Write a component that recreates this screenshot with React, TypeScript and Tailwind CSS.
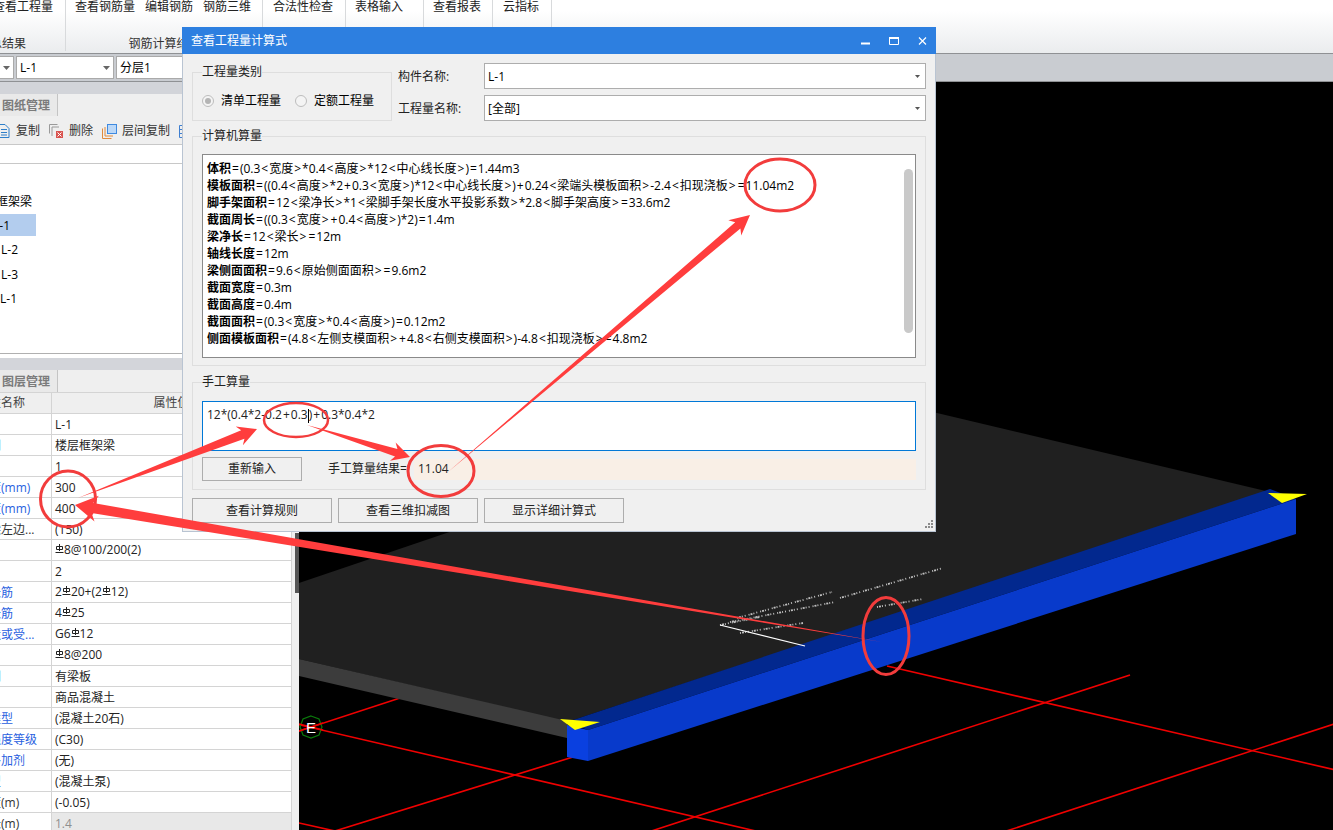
const formulas = [
  ["体积", "=(0.3<宽度>*0.4<高度>*12<中心线长度>)=1.44m3"],
  ["模板面积", "=((0.4<高度>*2+0.3<宽度>)*12<中心线长度>)+0.24<梁端头模板面积>-2.4<扣现浇板>=11.04m2"],
  ["脚手架面积", "=12<梁净长>*1<梁脚手架长度水平投影系数>*2.8<脚手架高度>=33.6m2"],
  ["截面周长", "=((0.3<宽度>+0.4<高度>)*2)=1.4m"],
  ["梁净长", "=12<梁长>=12m"],
  ["轴线长度", "=12m"],
  ["梁侧面面积", "=9.6<原始侧面面积>=9.6m2"],
  ["截面宽度", "=0.3m"],
  ["截面高度", "=0.4m"],
  ["截面面积", "=(0.3<宽度>*0.4<高度>)=0.12m2"],
  ["侧面模板面积", "=(4.8<左侧支模面积>+4.8<右侧支模面积>)-4.8<扣现浇板>=4.8m2"],
];

// "#" marks the rebar grade symbol in a value
const rows = [
  { name: "名称", value: "L-1" },
  { name: "结构类别", value: "楼层框架梁", blue: true },
  { name: "跨数量", value: "1" },
  { name: "截面宽度(mm)", value: "300", blue: true },
  { name: "截面高度(mm)", value: "400", blue: true },
  { name: "轴线距梁左边...", value: "(150)" },
  { name: "箍筋", value: "#8@100/200(2)" },
  { name: "胶数", value: "2" },
  { name: "上部通长筋", value: "2#20+(2#12)", blue: true },
  { name: "下部通长筋", value: "4#25", blue: true },
  { name: "侧面构造或受...", value: "G6#12", blue: true },
  { name: "拉筋", value: "#8@200" },
  { name: "定额类别", value: "有梁板", blue: true },
  { name: "材质", value: "商品混凝土" },
  { name: "混凝土类型", value: "(混凝土20石)", blue: true },
  { name: "混凝土强度等级", value: "(C30)", blue: true },
  { name: "混凝土外加剂", value: "(无)", blue: true },
  { name: "泵送类型", value: "(混凝土泵)", blue: true },
  { name: "泵送高度(m)", value: "(-0.05)" },
  { name: "截面周长(m)", value: "1.4", disabled: true },
];

const RebarMark = () => (
  <svg width="9" height="10" viewBox="0 0 9 10" className="mb-[3px] inline-block" fill="none" stroke="#222" strokeWidth="1">
    <path d="M4.5 0v7M1.5 2.5h6v3h-6zM0.5 8.5h8" />
  </svg>
);

const RebarValue = ({ text }: { text: string }) => {
  const parts = text.split("#");
  return (
    <span>
      {parts.map((part, i) => (
        <span key={i}>
          {i > 0 && <RebarMark />}
          {part}
        </span>
      ))}
    </span>
  );
};

// the operators sit wider apart in the original font
const Expr = ({ text }: { text: string }) => (
  <>
    {text.split(/([<>=+])/).map((part, i) =>
      i % 2 === 1 ? (
        <span key={i} className="mx-[1px]">
          {part}
        </span>
      ) : (
        part
      )
    )}
  </>
);

const RibbonGroup = ({ width, label, labelClass, children }: any) => (
  <div className={`flex h-[51px] shrink-0 flex-col justify-between border-r border-[#d8dadc] ${width}`}>
    <div className="flex gap-[10px] whitespace-nowrap leading-[13px] text-[#222]">{children}</div>
    {label && <div className={`whitespace-nowrap leading-[14px] text-[#333] ${labelClass}`}>{label}</div>}
  </div>
);

const Ribbon = () => (
  <div className="flex h-[54px] border-b border-[#8f9194] bg-gradient-to-b from-white from-20% to-[#eaecee]">
    <RibbonGroup width="w-[66px]" label="汇总结果" labelClass="-ml-[22px]">
      <span className="-ml-[7px]">查看工程量</span>
    </RibbonGroup>
    <RibbonGroup width="w-[197px]" label="钢筋计算结果" labelClass="pl-[1px] text-center">
      <span className="ml-[9px]">查看钢筋量</span>
      <span>编辑钢筋</span>
      <span>钢筋三维</span>
    </RibbonGroup>
    <RibbonGroup width="w-[83px]">
      <span className="ml-[10px]">合法性检查</span>
    </RibbonGroup>
    <RibbonGroup width="w-[78px]">
      <span className="ml-[9px]">表格输入</span>
    </RibbonGroup>
    <RibbonGroup width="w-[69px]">
      <span className="ml-[9px]">查看报表</span>
    </RibbonGroup>
    <RibbonGroup width="w-[59px]">
      <span className="ml-[10px]">云指标</span>
    </RibbonGroup>
  </div>
);

const ComboArrow = () => (
  <svg width="7" height="4" viewBox="0 0 7 4" className="shrink-0">
    <path d="M0 0h7L3.5 4z" fill="#666" />
  </svg>
);

const ComboRow = () => (
  <div className="flex h-[28px] items-start gap-[2px] border-b border-[#8f9194] bg-[#c9ccd1] pt-[2px]">
    <div className="flex h-[23px] w-[14px] items-center justify-center border border-[#aaa] border-l-0 bg-white">
      <ComboArrow />
    </div>
    <div className="flex h-[23px] w-[98px] items-center justify-between border border-[#aaa] bg-white pl-[3px] pr-[3px] pt-[1px]">
      L-1
      <ComboArrow />
    </div>
    <div className="flex h-[23px] w-[120px] items-center border border-[#aaa] bg-white pl-[3px] pt-[1px]">分层1</div>
  </div>
);

const PanelTab = ({ label }: { label: string }) => (
  <div className="flex h-[22px] w-[58px] shrink-0 items-center border-r border-[#c4c4c4] bg-[#e9e9e9] pl-[2px] pt-[1px] font-semibold text-[#7b7b7b]">
    {label}
  </div>
);

const ToolIcon = ({ kind }: { kind: string }) => {
  if (kind === "copy")
    return (
      <svg width="10" height="14" viewBox="0 0 10 14" fill="none" stroke="#2f7fc9">
        <path d="M-3 .5h8l4 4v9H-3zM1 5.5h6M1 8.5h6M1 11h6" />
      </svg>
    );
  if (kind === "del")
    return (
      <svg width="15" height="15" viewBox="0 0 15 15" fill="none">
        <path d="M.5 9.5V.5h8M3 12V3h7" stroke="#9a9a9a" />
        <rect x="7" y="7" width="7" height="7" fill="#d9534f" />
        <path d="M8.5 8.5l4 4m0-4l-4 4" stroke="#fff" />
      </svg>
    );
  if (kind === "floor")
    return (
      <svg width="15" height="15" viewBox="0 0 15 15" fill="none">
        <path d="M.5 4.5v10h9M3 3v9h8" stroke="#e08a3c" />
        <rect x="5.5" y=".5" width="9" height="9" fill="#bcd8f7" stroke="#3f8ae0" />
      </svg>
    );
  return (
    <svg width="12" height="13" viewBox="0 0 12 13" fill="none" stroke="#3f7fd0">
      <path d="M.5.5h11v12H.5zM.5 4.5h11M.5 8.5h11M4.5.5v12" />
    </svg>
  );
};

const DrawingPanel = () => (
  <div className="flex h-[271px] shrink-0 flex-col">
    <div className="h-[12px] bg-[#d2d4d9]" />
    <PanelTab label="图纸管理" />
    <div className="flex h-[29px] items-center gap-[6px] overflow-hidden whitespace-nowrap border-b border-[#c8c8c8] bg-[#efefef] pt-[2px] text-[#333]">
      <ToolIcon kind="copy" />
      <span>复制</span>
      <span className="ml-[3px]">
        <ToolIcon kind="del" />
      </span>
      <span className="-ml-[1px]">删除</span>
      <span className="ml-[3px]">
        <ToolIcon kind="floor" />
      </span>
      <span className="-ml-[1px]">层间复制</span>
      <span className="ml-[3px]">
        <ToolIcon kind="list" />
      </span>
    </div>
    <div className="h-[19px] border-b border-[#c8c8c8] bg-white" />
    <div className="flex-1 bg-white pt-[26px] text-black">
      <div className="-ml-[28px] flex h-[24px] items-center">楼层框架梁</div>
      <div className="flex h-[22px] w-[36px] items-center bg-[#b3cdee] pt-[1px] -indent-[7px]">L-1</div>
      <div className="flex h-[26px] items-center pl-[1px] pt-[2px]">L-2</div>
      <div className="flex h-[24px] items-center pl-[1px] pt-[2px]">L-3</div>
      <div className="flex h-[24px] items-center pt-[2px]">L-1</div>
    </div>
  </div>
);

const PropertyTable = () => (
  <div className="flex flex-1 flex-col overflow-hidden bg-white">
    <div className="grid h-[22px] shrink-0 grid-cols-[52px_240px] border-b border-t border-[#d4d4d4] bg-[#efefef] text-[#444]">
      <div className="flex items-center overflow-hidden border-r border-[#d4d4d4]">
        <span className="-ml-[23px] whitespace-nowrap">属性名称</span>
      </div>
      <div className="flex items-center justify-center border-r border-[#c8c8c8]">属性值</div>
    </div>
    {rows.map((row) => (
      <div key={row.name} className="grid h-[21px] shrink-0 grid-cols-[52px_240px]">
        <div className="flex items-center overflow-hidden border-b border-r border-[#d4d4d4] pt-[1px]">
          <span className={`-ml-[47px] whitespace-nowrap ${row.blue ? "text-[#2a5fe0]" : "text-[#333]"}`}>{row.name}</span>
        </div>
        <div
          className={`flex items-center border-b border-r border-[#d4d4d4] pl-[3px] pt-[1px] ${
            row.disabled ? "bg-[#e8e8e8] text-[#8f8f8f]" : "text-[#222]"
          }`}
        >
          <RebarValue text={row.value} />
        </div>
      </div>
    ))}
  </div>
);

const LeftPanel = () => (
  <div className="flex w-[299px] shrink-0 flex-col overflow-hidden bg-[#efefef]">
    <DrawingPanel />
    <div className="h-[5px] shrink-0 border-t border-[#b0b0b0] bg-white" />
    <div className="h-[12px] shrink-0 bg-[#d3d5da]" />
    <PanelTab label="图层管理" />
    <div className="flex min-h-0 flex-1">
      <PropertyTable />
      <div className="ml-[3px] flex w-[4px] flex-col">
        <div className="h-[141px] bg-[#f4f4f4]" />
        <div className="h-[60px] bg-[#555]" />
      </div>
    </div>
  </div>
);

// page coordinates, so the numbers read the same as in the screenshot
const Viewport = () => (
  <svg viewBox="299 82 1034 748" className="h-[748px] flex-1 bg-black">
    <g stroke="#f00000" strokeWidth="1.6" fill="none">
      <path d="M296 724L760 832" />
      <path d="M299 823L335 831L573 757" />
      <path d="M299 731L400 698" />
      <path d="M887 666L1340 771" />
      <path d="M630 838L1130 675" />
      <path d="M985 838L1340 722" />
    </g>
    <polygon points="299,583 857,394 1270,492 567,722 299,659" fill="#202020" />
    <polygon points="299,659 567,721 567,738 299,676" fill="#3c3c3c" />
    <polygon points="567,722 1270,489 1296,499 588,730" fill="#02288e" />
    <polygon points="588,730 1296,499 1296,534 588,761" fill="#083acb" />
    <polygon points="567,725 588,730 588,761 567,757" fill="#0a40e0" />
    <polygon points="1268,493 1307,494 1282,503" fill="#ffff00" />
    <polygon points="560,719 600,722 575,730" fill="#ffff00" />
    <g stroke="#e8e8e8" strokeWidth="1.8" fill="none" strokeDasharray="1 1 2 1 1 2 1 3" opacity="0.8">
      <path d="M840 598L943 568" />
      <path d="M737 618L832 592" />
      <path d="M730 622L835 602" />
      <path d="M740 633L803 623" />
      <path d="M877 607L923 599" />
      <path d="M720 625L760 617" />
    </g>
    <path d="M720 625L805 646" stroke="#fff" strokeWidth="1.2" />
    <polygon points="311,716 319,719 322,727 319,735 311,738 303,735 300,727 303,719" fill="none" stroke="#0a7a0a" strokeWidth="1.2" />
    <path d="M299 731L323 723M299 724L323 730" stroke="#f00000" strokeWidth="1.4" />
    <text x="306" y="733" fill="#fff" fontSize="15" fontFamily="Liberation Sans">E</text>
  </svg>
);

const GroupBox = ({ label, className, children }: any) => (
  <div className={`border border-[#dedede] ${className}`}>
    <div className="-mt-[9px] ml-[9px] h-[16px] w-fit bg-[#f0f0f0] leading-[16px] text-[#222]">{label}</div>
    {children}
  </div>
);

const Radio = ({ label, checked }: { label: string; checked?: boolean }) => (
  <div className="flex items-center gap-[7px]">
    <span className="flex h-[12px] w-[12px] items-center justify-center rounded-full border border-[#bdbdbd] bg-[#f4f4f4]">
      {checked && <span className="h-[6px] w-[6px] rounded-full bg-[#b4b4b4]" />}
    </span>
    <span className="pt-[1px]">{label}</span>
  </div>
);

const SelectField = ({ label, value }: { label: string; value: string }) => (
  <div className="flex h-[26px] items-center">
    <span className="w-[86px] pt-[1px] text-[#222]">{label}</span>
    <div className="flex h-full flex-1 items-center justify-between border border-[#adadad] bg-white pl-[3px] pr-[5px] pt-[1px]">
      {value}
      <svg width="5" height="3" viewBox="0 0 5 3">
        <path d="M0 0h5L2.5 3z" fill="#555" />
      </svg>
    </div>
  </div>
);

const DialogButton = ({ label, className }: { label: string; className?: string }) => (
  <div className={`flex items-center justify-center border border-[#adadad] bg-[#f0f0f0] text-[#222] ${className}`}>{label}</div>
);

const Dialog = () => (
  <div className="absolute left-[182px] top-[27px] flex h-[505px] w-[754px] flex-col border-x border-b border-[#b9c4d2] bg-[#f0f0f0]">
    <div className="-mx-[1px] flex h-[27px] shrink-0 items-center justify-between bg-[#2d7fe0] pl-[9px] pr-[9px] text-white">
      查看工程量计算式
      <svg width="66" height="8" viewBox="0 0 66 8" fill="none" stroke="#fff">
        <path d="M0 6.5h9" strokeWidth="2" />
        <path d="M28.5 .5h9v7h-9z" />
        <path d="M28 1h10" strokeWidth="2" />
        <path d="M58 .5l7 7m0-7l-7 7" strokeWidth="1.2" />
      </svg>
    </div>
    <div className="flex flex-1 flex-col px-[9px]">
      <div className="mt-[9px] flex h-[58px] items-start gap-[6px]">
        <GroupBox label="工程量类别" className="mt-[9px] h-[49px] w-[200px]">
          <div className="mt-[14px] flex gap-[14px] pl-[9px]">
            <Radio label="清单工程量" checked />
            <Radio label="定额工程量" />
          </div>
        </GroupBox>
        <div className="flex flex-1 flex-col gap-[6px]">
          <SelectField label="构件名称:" value="L-1" />
          <SelectField label="工程量名称:" value="[全部]" />
        </div>
      </div>
      <GroupBox label="计算机算量" className="mt-[15px] h-[230px]">
        <div className="mx-[9px] mt-[10px] flex h-[204px] border border-[#8a8a8a] bg-white text-black">
          <div className="flex-1 whitespace-nowrap pl-[4px] pt-[5px] leading-[17px]">
            {formulas.map(([name, expr]) => (
              <div key={name}>
                <span className="font-bold">{name}</span>
                <Expr text={expr} />
              </div>
            ))}
          </div>
          <div className="mr-[2px] mt-[14px] h-[164px] w-[9px] rounded-full bg-[#c9c9c9]" />
        </div>
      </GroupBox>
      <GroupBox label="手工算量" className="mt-[16px] h-[108px]">
        <div className="mx-[9px] mt-[11px] h-[50px] border border-[#0078d7] bg-white pl-[4px] pt-[4px] leading-[17px] text-[#222]">
          <Expr text="12*(0.4*2-0.2+0.3" />
          <span className="inline-block h-[14px] w-px bg-black align-middle" />
          <Expr text=")+0.3*0.4*2" />
        </div>
        <div className="mx-[9px] mt-[6px] flex items-center">
          <DialogButton label="重新输入" className="h-[24px] w-[100px]" />
          <span className="ml-[26px] w-[86px] text-[#222]">手工算量结果=</span>
          <div className="flex h-[21px] flex-1 items-center bg-[#f9efe6] pl-[4px] text-[#222]">11.04</div>
        </div>
      </GroupBox>
      <div className="mt-[8px] flex items-end gap-[6px]">
        <DialogButton label="查看计算规则" className="h-[25px] w-[140px]" />
        <DialogButton label="查看三维扣减图" className="h-[25px] w-[140px]" />
        <DialogButton label="显示详细计算式" className="h-[25px] w-[140px]" />
        <svg width="9" height="9" viewBox="0 0 9 9" className="-mb-[6px] -mr-[7px] ml-auto" fill="#8a8a8a">
          <path d="M7 0h2v2H7zM4 3h2v2H4zM7 3h2v2H7zM1 6h2v2H1zM4 6h2v2H4zM7 6h2v2H7z" />
        </svg>
      </div>
    </div>
  </div>
);

// tapered arrow: thin at the tail, thick at the head
const arrowPoints = (x1: number, y1: number, x2: number, y2: number, shaft: number, headLen: number, headWidth: number) => {
  const len = Math.hypot(x2 - x1, y2 - y1);
  const ux = (x2 - x1) / len;
  const uy = (y2 - y1) / len;
  const nx = -uy;
  const ny = ux;
  const bx = x2 - ux * headLen;
  const by = y2 - uy * headLen;
  const neckX = x2 - ux * headLen * 0.8;
  const neckY = y2 - uy * headLen * 0.8;
  const pts = [
    [x1, y1],
    [neckX + (nx * shaft) / 2, neckY + (ny * shaft) / 2],
    [bx + (nx * headWidth) / 2, by + (ny * headWidth) / 2],
    [x2, y2],
    [bx - (nx * headWidth) / 2, by - (ny * headWidth) / 2],
    [neckX - (nx * shaft) / 2, neckY - (ny * shaft) / 2],
  ];
  return pts.map((p) => p.join(",")).join(" ");
};

const Annotations = () => (
  <svg viewBox="0 0 1333 830" className="pointer-events-none absolute inset-0 h-[830px] w-[1333px]">
    <g fill="none" stroke="#f23c3c">
      <ellipse cx="780" cy="185" rx="35" ry="26" strokeWidth="3" />
      <ellipse cx="296" cy="420" rx="32" ry="17" strokeWidth="2.5" />
      <ellipse cx="441" cy="471" rx="33" ry="25.5" strokeWidth="3" />
      <ellipse cx="68" cy="499" rx="27.5" ry="28" strokeWidth="3" />
      <ellipse cx="886" cy="636" rx="23" ry="38.5" strokeWidth="3" />
    </g>
    <g fill="#ff3d3d">
      <polygon points={arrowPoints(78, 498, 257, 429, 9, 19, 20)} />
      <polygon points={arrowPoints(882, 642, 75, 505, 10, 22, 26)} />
      <polygon points={arrowPoints(307, 425, 410, 457, 8, 18, 19)} />
      <polygon points={arrowPoints(448, 472, 750, 215, 8, 20, 20)} />
    </g>
  </svg>
);

const App = () => {
  return (
    <div className="relative h-[830px] w-[1333px] overflow-hidden bg-black font-['Open_Sans','Noto_Sans_CJK_SC','Liberation_Sans',sans-serif] text-[12px] leading-none">
      <Ribbon />
      <ComboRow />
      <div className="flex h-[748px]">
        <LeftPanel />
        <Viewport />
      </div>
      <Dialog />
      <Annotations />
    </div>
  );
};

export default App;
